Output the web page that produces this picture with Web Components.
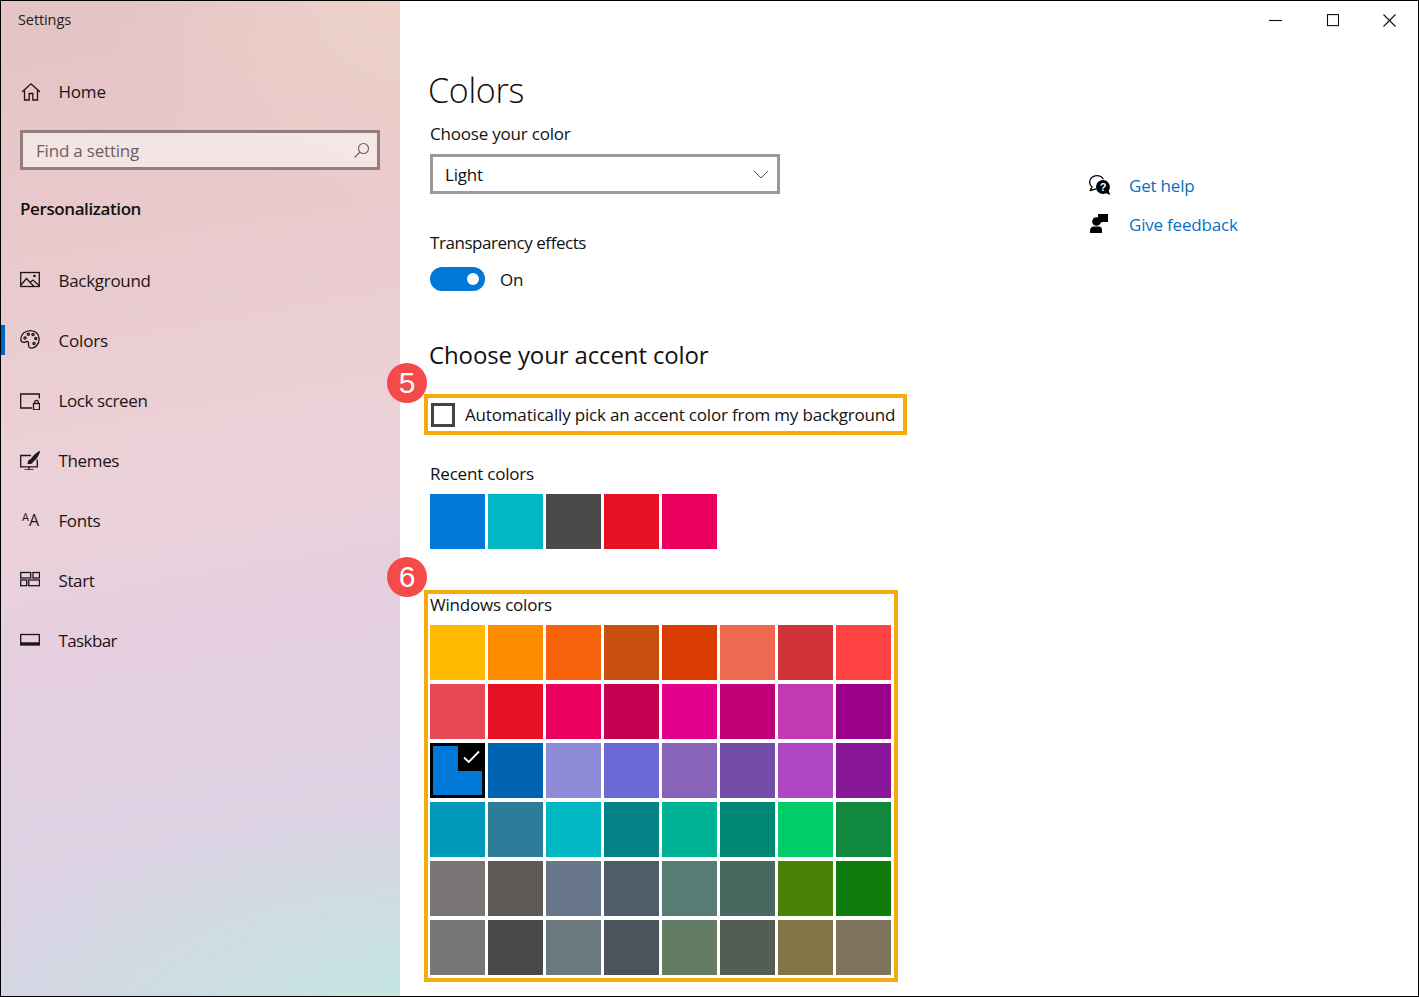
<!DOCTYPE html>
<html lang="en"><head><meta charset="utf-8"><title>Settings</title>
<style>
html,body{margin:0;padding:0;background:#fff}
body{font-family:"Open Sans","Noto Sans",sans-serif;color:#111}
</style></head><body>
<settings-window>
  <side-nav slot="side">
    <nav-item icon="home" slot="home">Home</nav-item>
    <nav-item icon="background" style="letter-spacing:-.3px">Background</nav-item>
    <nav-item icon="colors" active>Colors</nav-item>
    <nav-item icon="lock" style="letter-spacing:-.4px">Lock screen</nav-item>
    <nav-item icon="themes" style="letter-spacing:-.35px">Themes</nav-item>
    <nav-item icon="fonts" style="letter-spacing:-.4px">Fonts</nav-item>
    <nav-item icon="start" style="letter-spacing:-.4px">Start</nav-item>
    <nav-item icon="taskbar" style="letter-spacing:-.6px">Taskbar</nav-item>
  </side-nav>
  <color-page slot="main"></color-page>
</settings-window>
<script>
const FONT='"Open Sans","Noto Sans",sans-serif';
const def=(n,c)=>customElements.define(n,c);
const mk=(self,html)=>{self.attachShadow({mode:'open'}).innerHTML=html;};

const ICONS={
home:`<path d="M2 11 11 2.800 20 11M4.500 9.300V19h4.700v-6.500h3.600V19h4.700V9.300"/>`,
background:`<rect x=".7" y="2.500" width="18.600" height="14"/><path d="M1 15 6.500 8.500l7.500 8M10.500 12l2.500-2 6 5.500"/><circle cx="14.500" cy="6" r=".7"/>`,
colors:`<path d="M10.500 .7C5 .7 .8 4.300 .8 9c0 2.200 1.200 3.400 2.900 3.400 1.500 0 2.300-.9 3.400-.9 1.300 0 1.600 1.200 1.400 2.600-.3 2 .6 4.100 3 4.100 3.900 0 7.700-4 7.700-9.200C19.200 4.300 15.500.7 10.500.7Z"/><circle cx="5" cy="8" r="1.100"/><circle cx="8.300" cy="4.300" r="1.100"/><circle cx="13" cy="4.500" r="1.100"/><circle cx="15.800" cy="8.500" r="1.100"/><circle cx="14" cy="13.500" r="1.100"/>`,
lock:`<path d="M19.300 8.500V4H.7v14h11.500"/><rect x="13.500" y="13.500" width="6" height="6.300"/><path d="M14.800 13.500V12a1.700 1.700 0 0 1 3.400 0v1.500"/>`,
themes:`<path d="M11 5.500H.7v11.300h16.600V9.500M9 16.800v3M4.500 19.800h9"/><path d="M19.300 1.800c-3 1.500-7 5.500-8 7.700l1.800 1.500c2-1.200 5.300-5.700 6.200-9.200Z" fill="currentColor"/><path d="M11 9.700c-1.800.2-2.500 1.400-2.700 3.700 2 .2 3.800-.5 4.300-2.200" fill="currentColor"/>`,
start:`<rect x=".7" y="2.500" width="10" height="5.500"/><rect x="13" y="2.500" width="6.500" height="5.500"/><rect x=".7" y="10" width="6" height="5.700"/><rect x="8.700" y="10" width="10.800" height="5.700"/>`,
taskbar:`<rect x=".7" y="4.500" width="18.600" height="10.500"/><path d="M1 12.300h18v2.700H1z" fill="currentColor" stroke="none"/>`
};

def('nav-item',class extends HTMLElement{connectedCallback(){
 const k=this.getAttribute('icon');
 const ic=k==='fonts'
  ?`<span class="aa" aria-hidden="true"><i>A</i><b>A</b></span>`
  :`<svg width="20" height="20" viewBox="0 0 20 20" fill="none" stroke="currentColor" stroke-width="1.300">${ICONS[k]}</svg>`;
 mk(this,`<style>
 :host{display:flex;align-items:center;height:60px;position:relative;color:#1c1418;font-size:17px;letter-spacing:-.2px}
 .ic{width:20px;height:20px;margin-left:19px;flex:none;display:flex}
 .t{margin-left:18.500px}
 :host([active])::before{content:"";position:absolute;left:0;top:15px;width:4px;height:30px;background:#0067c0}
 .aa{display:flex;align-items:flex-end;font-family:"Open Sans",sans-serif;letter-spacing:0;height:18px;margin-left:2px}
 .aa i{font-style:normal;font-size:11px;line-height:11px;transform:translateY(-6px)}
 .aa b{font-weight:400;font-size:16px;line-height:16px}
 </style><span class="ic">${ic}</span><span class="t"><slot></slot></span>`);
}});

def('search-box',class extends HTMLElement{constructor(){super();mk(this,`<style>
 :host{display:flex;align-items:center;justify-content:space-between;box-sizing:border-box;height:40px;width:360px;border:3px solid #937d7d;background:rgba(255,255,255,.52);padding:0 7px 0 13px;color:#6d5e60;font-size:17px;letter-spacing:-.2px}
 svg{flex:none}
 </style><slot></slot><svg width="17" height="17" viewBox="0 0 17 17" fill="none" stroke="#6d5e60" stroke-width="1.100"><circle cx="10.500" cy="6.500" r="5"/><path d="M7 10 1.500 15.500"/></svg>`);}});

def('side-nav',class extends HTMLElement{constructor(){super();mk(this,`<style>
 :host{display:block;width:399px;height:100%;box-sizing:border-box;font-family:${FONT};
 background:
  radial-gradient(430px 190px at 100% 100%,rgba(197,229,226,1) 0,rgba(199,228,226,.55) 45%,rgba(205,222,228,0) 100%),
  radial-gradient(300px 230px at 100% 0,#edd2ca 0,rgba(237,210,202,0) 100%),
  linear-gradient(170deg,#e3c3c3 0,#e8c8ca 20%,#ecd1d8 45%,#e3cfe2 70%,#d8d3e3 90%,#d3d8e5 100%);}
 .title{font-size:14.500px;color:#222;padding:10px 0 0 17px;height:23px;line-height:18px;letter-spacing:-.1px}
 .home{margin-top:27px}
 search-box{margin:9px 0 0 19px}
 .h{font-weight:600;font-size:17px;letter-spacing:-.4px;margin:27px 0 0 19px;line-height:24px;color:#111}
 .list{margin-top:29px}
 </style>
 <div class="title">Settings</div>
 <div class="home"><slot name="home"></slot></div>
 <search-box>Find a setting</search-box>
 <div class="h">Personalization</div>
 <div class="list"><slot></slot></div>`);}});

def('color-swatch',class extends HTMLElement{connectedCallback(){
 const c=this.getAttribute('color');const sel=this.hasAttribute('selected');
 mk(this,`<style>
 :host{display:block;width:55px;height:55px;background:${c};position:relative;box-sizing:border-box}
 :host([selected]){border:3px solid #000;outline:0}
 .m{position:absolute;top:-3px;right:-3px;width:27px;height:28px;background:#000;display:flex;align-items:center;justify-content:center}
 </style>${sel?`<span class="m"><svg width="17" height="14" viewBox="0 0 17 14" fill="none" stroke="#fff" stroke-width="1.800"><path d="M1 7.500 5.800 12 16 1.500"/></svg></span>`:''}`);
}});

def('swatch-grid',class extends HTMLElement{connectedCallback(){
 const rows=this.getAttribute('colors').split('|').map(r=>r.split(' '));
 const sel=this.getAttribute('selected');
 mk(this,`<style>:host{display:grid;grid-template-columns:repeat(${rows[0].length},55px);column-gap:3px;row-gap:4px;justify-content:start}</style>`+
 rows.flat().map(c=>`<color-swatch color="#${c}"${c===sel?' selected':''}></color-swatch>`).join(''));
}});

def('drop-down',class extends HTMLElement{constructor(){super();mk(this,`<style>
 :host{display:flex;align-items:center;justify-content:space-between;box-sizing:border-box;width:350px;height:40px;border:3px solid #999;padding:0 8px 0 12px;font-size:17px;letter-spacing:-.2px}
 </style><slot></slot><svg width="16" height="9" viewBox="0 0 16 9" fill="none" stroke="#555" stroke-width="1"><path d="M.8.800 8 8 15.200.8"/></svg>`);}});

def('toggle-switch',class extends HTMLElement{constructor(){super();mk(this,`<style>
 :host{display:flex;align-items:center;gap:15px;font-size:17px;letter-spacing:-.2px}
 .t{width:55px;height:24px;border-radius:12px;background:#0078d7;position:relative;flex:none}
 .t::after{content:"";position:absolute;right:6px;top:6px;width:12px;height:12px;border-radius:50%;background:#fff}
 </style><span class="t"></span><slot></slot>`);}});

def('check-box',class extends HTMLElement{constructor(){super();mk(this,`<style>
 :host{display:flex;align-items:center;gap:10px;font-size:17px;letter-spacing:-.17px}
 .b{box-sizing:border-box;width:24px;height:24px;border:3px solid #444;flex:none}
 </style><span class="b"></span><slot></slot>`);}});

def('note-box',class extends HTMLElement{constructor(){super();mk(this,`<style>
 :host{display:block;box-sizing:border-box;border:4px solid #f5ab0d;position:relative;margin-left:-6px}
 .n{position:absolute;width:40px;height:40px;border-radius:50%;background:#f44a4a;color:#fff;font:400 30px/40px "Liberation Sans",sans-serif;text-align:center;left:-41px;top:var(--badge-top,-35px)}
 </style><span class="n"></span><slot></slot>`);}
 connectedCallback(){this.shadowRoot.querySelector('.n').textContent=this.getAttribute('n');}
});

def('help-link',class extends HTMLElement{connectedCallback(){
 const k=this.getAttribute('icon');
 const icon=k==='help'
 ?`<svg width="24" height="24" viewBox="0 0 24 24"><path d="M8.500 14.800 2 16.500l2-3.400a7 7 0 0 1-2.400-5C1.600 4.300 5 1.700 8.800 1.700c3 0 5.400 1.400 6.500 3.600" fill="none" stroke="#000" stroke-width="1.300" stroke-linejoin="round"/><path d="M15 6a7 7 0 0 0 0 14c1.200 0 2.200-.3 3.100-.8l4.200 1.800-1.600-4.200A7 7 0 0 0 15 6Z" fill="#000"/><text x="15" y="17" font-family="Liberation Sans,sans-serif" font-size="11" font-weight="700" fill="#fff" text-anchor="middle">?</text></svg>`
 :`<svg width="24" height="24" viewBox="0 0 24 24" fill="#000"><circle cx="8.500" cy="8.500" r="4.300"/><path d="M2 20v-2.500C2 15 4 13.500 6 13.500h5c2 0 3 1.500 3 4V20Z"/><path d="M10 1h10v8h-6l-3.500 2.500V7.500H10Z"/></svg>`;
 mk(this,`<style>
 :host{display:flex;align-items:center;gap:17px;height:39px;color:#0a6fc2;font-size:17px;letter-spacing:-.2px}
 svg{flex:none}
 </style>${icon}<slot></slot>`);
}});

def('win-controls',class extends HTMLElement{constructor(){super();mk(this,`<style>
 :host{display:flex;justify-content:flex-end;height:38px}
 span{width:57px;height:38px;display:flex;align-items:center;justify-content:center}
 svg{display:block}
 </style>
 <span><svg width="13" height="13" viewBox="0 0 13 13" stroke="#111" fill="none" stroke-width="1.100"><path d="M0 6.500h13"/></svg></span>
 <span><svg width="13" height="13" viewBox="0 0 13 13" stroke="#111" fill="none" stroke-width="1.100"><rect x="1.500" y=".6" width="11" height="11"/></svg></span>
 <span><svg width="13" height="13" viewBox="0 0 13 13" stroke="#111" fill="none" stroke-width="1.100"><path d="M.5.500 12.500 12.500M12.500.500.500 12.500"/></svg></span>`);}});

def('color-page',class extends HTMLElement{constructor(){super();mk(this,`<style>
 :host{display:flex;flex-direction:column;height:100%;font-family:${FONT};color:#111}
 .body{display:flex;flex:1}
 .col{width:658px;padding-left:30px;flex:none;box-sizing:content-box}
 h1{font-weight:300;font-size:34px;line-height:46px;margin:28px 0 0 -2px;letter-spacing:-.3px}
 .lbl{font-size:17px;line-height:24px;letter-spacing:-.2px}
 .l1{margin-top:9px}
 drop-down{margin-top:8px}
 .l2{margin-top:37px;letter-spacing:-.45px}
 toggle-switch{margin-top:12px}
 h2{font-weight:400;font-size:24px;line-height:32px;margin:48px 0 0 -1px;letter-spacing:-.13px}
 .n5{margin-top:23px;width:483px;height:41px;display:flex;align-items:center;padding-left:3px;padding-right:6px}
 .l3{margin-top:27px}
 .rec{margin-top:8px}
 .n6{margin-top:41px;width:474px;height:392px;padding:0 0 0 2px;--badge-top:-37px}
 .n6 .lbl{line-height:22px;margin-bottom:9px}
 aside{padding-top:127px}
 </style>
 <win-controls></win-controls>
 <div class="body">
 <div class="col">
  <h1>Colors</h1>
  <div class="lbl l1">Choose your color</div>
  <drop-down>Light</drop-down>
  <div class="lbl l2">Transparency effects</div>
  <toggle-switch>On</toggle-switch>
  <h2>Choose your accent color</h2>
  <note-box class="n5" n="5"><check-box>Automatically pick an accent color from my background</check-box></note-box>
  <div class="lbl l3">Recent colors</div>
  <swatch-grid class="rec" colors="0078D7 00B7C3 4C4A48 E81123 EA005E"></swatch-grid>
  <note-box class="n6" n="6">
   <div class="lbl">Windows colors</div>
   <swatch-grid selected="0078D7" colors="FFB900 FF8C00 F7630C CA5010 DA3B01 EF6950 D13438 FF4343|E74856 E81123 EA005E C30052 E3008C BF0077 C239B3 9A0089|0078D7 0063B1 8E8CD8 6B69D6 8764B8 744DA9 B146C2 881798|0099BC 2D7D9A 00B7C3 038387 00B294 018574 00CC6A 10893E|7A7574 5D5A58 68768A 515C6B 567C73 486860 498205 107C10|767676 4C4A48 69797E 4A5459 647C64 525E54 847545 7E735F"></swatch-grid>
  </note-box>
 </div>
 <aside>
  <help-link icon="help">Get help</help-link>
  <help-link icon="feedback">Give feedback</help-link>
 </aside>
 </div>`);}});

def('settings-window',class extends HTMLElement{constructor(){super();mk(this,`<style>
 :host{display:flex;box-sizing:border-box;width:1419px;height:997px;border:1px solid #000;background:#fff;overflow:hidden}
 .s{flex:none;height:100%}
 .m{flex:1;min-width:0;height:100%}
 </style><div class="s"><slot name="side"></slot></div><div class="m"><slot name="main"></slot></div>`);}});
</script>
</body></html>
